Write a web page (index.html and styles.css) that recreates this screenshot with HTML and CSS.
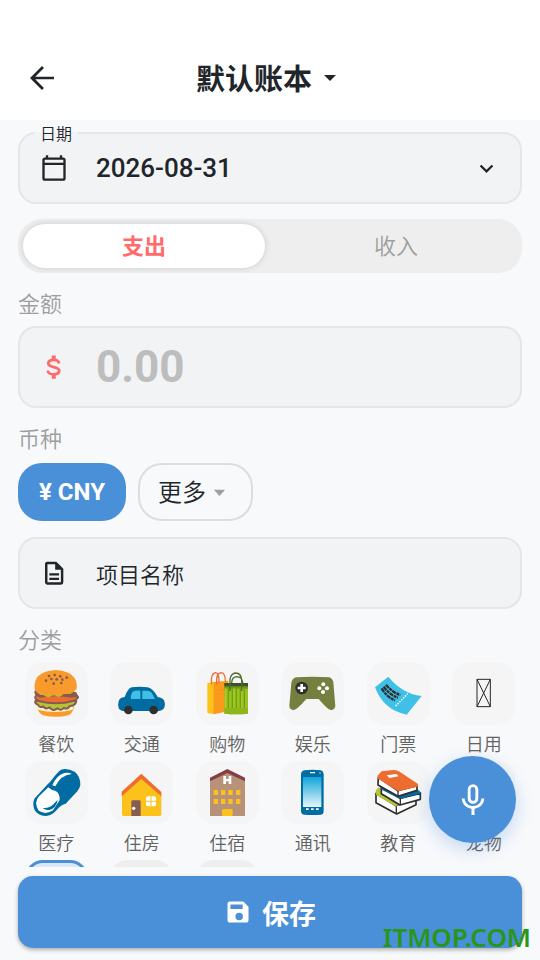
FILE: index.html
```html
<!DOCTYPE html>
<html lang="zh-CN">
<head>
<meta charset="utf-8">
<meta name="viewport" content="width=device-width, initial-scale=1">
<title>默认账本</title>
<link rel="stylesheet" href="styles.css">
</head>
<body>
<header class="appbar">
  <button class="back" type="button" aria-label="返回">
    <svg class="icon-lg" viewBox="0 0 24 24"><path fill="currentColor" d="M20 11.100H7.500l5.800-5.800L12 4l-8 8 8 8 1.300-1.300-5.800-5.800H20v-1.800z"/></svg>
  </button>
  <button class="book" type="button"><span>默认账本</span>
    <svg class="icon-lg" viewBox="0 0 24 24"><path fill="currentColor" d="M8 10l4 4 4-4z"/></svg>
  </button>
</header>

<main class="content">
  <div class="field field-date">
    <label class="float-label" for="date">日期</label>
    <svg class="icon" viewBox="0 0 24 24"><path fill="currentColor" d="M20 3h-1V1h-2v2H7V1H5v2H4c-1.100 0-2 .9-2 2v16c0 1.100.9 2 2 2h16c1.100 0 2-.9 2-2V5c0-1.100-.9-2-2-2zm0 18H4V9.500h16V21zm0-13.500H4V5h16v2.500z"/></svg>
    <input class="date-input" id="date" type="text" value="2026-08-31" readonly>
    <svg class="chevron" viewBox="0 0 24 24"><path fill="currentColor" d="M7.410 8.590L12 13.170l4.590-4.580L18 10l-6 6-6-6z"/></svg>
  </div>

  <div class="segment">
    <label class="segment-item"><input type="radio" name="kind" checked><span>支出</span></label>
    <label class="segment-item"><input type="radio" name="kind"><span>收入</span></label>
  </div>

  <label class="section-label" for="amount">金额</label>
  <div class="field field-amount">
    <svg class="icon dollar" viewBox="0 0 24 24"><path fill="none" stroke="currentColor" stroke-width="2.400" d="M16.300 9C16.100 6.800 14.200 5.900 11.800 5.900 9 5.900 7.100 7 7.100 8.800c0 4.500 9.400 2 9.400 6.500 0 2-2 3-4.700 3-3 0-4.900-1-5.100-3.300"/><path fill="none" stroke="currentColor" stroke-width="3.400" d="M11.800 2.200v4M11.800 18v4"/></svg>
    <input class="amount-input" id="amount" type="text" inputmode="decimal" placeholder="0.00">
  </div>

  <h2 class="section-label label-currency">币种</h2>
  <div class="chips">
    <button class="chip chip-active" type="button">¥ CNY</button>
    <button class="chip chip-more" type="button"><span>更多</span>
      <svg class="icon-sm" viewBox="0 0 24 24"><path fill="currentColor" d="M7 9.500l5 5.500 5-5.500z"/></svg>
    </button>
  </div>

  <div class="field field-name">
    <svg class="icon" viewBox="0 0 24 24"><path fill="currentColor" fill-rule="evenodd" d="M6.300 2.300H14l6 6v11.700q0 2-2 2H6.300q-2 0-2-2V4.300q0-2 2-2zM6.400 4.400v15.500h11.500V9.300H13V4.400zM8 12.200h8.300v2H8zM8 16h8.300v2H8z"/></svg>
    <input class="name-input" type="text" placeholder="项目名称" aria-label="项目名称">
  </div>

  <h2 class="section-label">分类</h2>
  <div class="categories">
    <button class="category" type="button">
      <svg class="tile" viewBox="29 21 189 189">
        <path fill="#f99a2c" d="M63 145h114q-1 29-18 36-37 9-76 0-18-8-20-36z"/>
        <path fill="#fff3cf" d="M64 146q20 18 52 14 37 4 60-14l-4 18q-50 14-106 0z"/>
        <path fill="#b5c334" stroke="#865c52" stroke-width="6" stroke-linejoin="round" d="M60 138q-2 8 8 11 5 11 15 5 9 11 19 3 12 14 24 3 11 9 19-1 13 5 18-6 17 0 20-15z"/>
        <path fill="#ee6c2f" stroke="#865c52" stroke-width="6" d="M62 122q58-18 122-1 10 9-8 16-53 15-106 1-16-8-8-16z"/>
        <path fill="#865c52" d="M59 106q58-12 124 6l7 17q-10-4-20-1-54-9-95 0-17-4-18-17z"/>
        <path fill="#b5c334" d="M64 107h115l-14 10q-14-6-22 1-10 13-20 5-10-6-18 2-13 4-20-5-14 2-21-13z"/>
        <path fill="#f99a2c" d="M58 102q-6-52 62-57 70 4 64 57-15 16-32 15-8-1-14 4-24-4-45 0-28-1-35-19z"/>
        <g fill="#865c52"><circle cx="101" cy="63" r="4"/><circle cx="118" cy="60" r="4"/><circle cx="135" cy="64" r="4"/><circle cx="154" cy="68" r="4"/><circle cx="92" cy="77" r="4"/><circle cx="108" cy="72" r="4"/><circle cx="124" cy="73" r="4"/><circle cx="141" cy="74" r="4"/><circle cx="115" cy="86" r="4"/><circle cx="138" cy="84" r="4"/></g>
      </svg>
      <span>餐饮</span>
    </button>
    <button class="category" type="button">
      <svg class="tile" viewBox="287 21 189 189">
        <path fill="#006ca2" d="M313 139q3-12 18-13 9-25 21-29 24-3 48 0 16 3 30 29 15 3 19 10 5 14 0 24-4 7-14 8H328q-12-1-15-9-3-10 0-20z"/>
        <path fill="#40c0e7" d="M357 109q10-3 21-2v25h-28q-2-14 7-23zM384 107h16q8 1 12 6l10 19h-38z"/>
        <circle cx="342" cy="165" r="13" fill="#2f2f2f"/><circle cx="418" cy="165" r="13" fill="#2f2f2f"/>
      </svg>
      <span>交通</span>
    </button>
    <button class="category" type="button">
      <svg class="tile" viewBox="18 21 189 189">
        <path fill="#fcc21b" d="M52 85l20-5v98l-20-4z"/><path fill="#f99a1c" d="M71 81l44-4v92l-44 9z"/>
        <path fill="#ff8a00" d="M88 106l27-10v10z"/>
        <g fill="none" stroke="#f46a35" stroke-width="4"><path d="M65 89q-4-32 11-36 12-1 11 31M80 89q-3-34 13-36 13 0 13 27"/></g>
        <path fill="#97c51b" d="M103 86h71v90q-36 3-71 0z"/><path fill="#709a16" d="M103 91h71v10h-71z"/><path fill="#3d512c" d="M103 84h71v10h-71z"/>
        <g fill="#6f9f15"><path d="M113 101h4v60h-4zM125 101h4v60h-4zM137 101h4v60h-4zM149 101h4v60h-4zM161 101h4v60h-4z"/></g>
        <path fill="#8eb51c" d="M103 159h71v17q-36 3-71 0z"/><path fill="#b5c334" d="M105 100h4v59h-4zM130 100h3v59h-3zM154 100h3v59h-3z"/>
        <g fill="none" stroke="#506b2c" stroke-width="4"><path d="M120 108V73q3-18 17-19 17 1 18 20v34M125 84q0-17 15-19 17 1 18 19"/></g>
      </svg>
      <span>购物</span>
    </button>
    <button class="category" type="button">
      <svg class="tile" viewBox="276 21 189 189">
        <path fill="#757f3f" d="M321 67q49-3 100 0 10 4 12 15l6 71q-3 13-14 12-8 0-36-33h-37q-28 32-37 33-13 0-14-13l6-68q2-13 14-17z"/>
        <circle cx="338" cy="99" r="19" fill="#2f2f2f"/><path fill="#fff" d="M334 87h8v8h8v8h-8v8h-8v-8h-8v-8h8z"/>
        <g fill="#fff"><circle cx="403" cy="88" r="6"/><circle cx="391" cy="100" r="6"/><circle cx="414" cy="100" r="6"/><circle cx="402" cy="111" r="6"/></g>
      </svg>
      <span>娱乐</span>
    </button>
    <button class="category" type="button">
      <svg class="tile" viewBox="36 21 189 189">
        <path fill="#40c0e7" d="M60 97l40-32q40 50 100 58l-45 56Q85 165 60 97z"/>
        <g fill="none" stroke="#2f2f2f" stroke-width="7" stroke-dasharray="13 2 9 2"><path d="M93 89q18 23 43 31M86 95q18 25 43 33M80 100q16 27 40 36"/></g>
        <path fill="none" stroke="#fff" stroke-width="5" stroke-linecap="round" stroke-dasharray="0 8" d="M157 117l-39 40"/>
      </svg>
      <span>门票</span>
    </button>
    <button class="category" type="button">
      <svg class="tile" viewBox="293 21 189 189">
        <path fill="none" stroke="#212529" stroke-width="3" d="M368 73h40v82h-40zl40 82M408 73l-40 82"/>
      </svg>
      <span>日用</span>
    </button>
    <button class="category" type="button">
      <svg class="tile" viewBox="29 18 189 189">
        <path fill="#006ca2" d="M137 44q19-6 41 6 18 14 17 40-2 11-9 19l-35 37q-14 3-25 17-14 18-33 20-22 0-34-16-9-19-2-36l40-43q7-6 14-16 15-20 26-28z"/>
        <path fill="#fff" d="M99 97q9 9 20 10 15 6 14 28l-20 31q-24 16-44 0-14-24 2-42zM111 91q11-29 36-37 16-3 22 3-33 3-49 37z"/>
        <path fill="#006ca2" d="M83 159q19 2 32-12l12-13q-4 25-25 31-14 0-19-6z"/>
      </svg>
      <span>医疗</span>
    </button>
    <button class="category" type="button">
      <svg class="tile" viewBox="287 18 189 189">
        <path fill="#fcc21b" d="M323 116l58-54 60 54v62q0 5-5 5H328q-5 0-5-5z"/>
        <path fill="#ee6c2f" d="M381 56l60 55v13l-60-52-59 52v-14z"/>
        <path fill="#865c52" d="M351 140q0-4 4-4h20q4 0 4 4v43h-28z"/><circle cx="358" cy="160" r="5" fill="#fff"/>
        <rect x="395" y="124" width="30" height="30" rx="6" fill="#fff"/><path stroke="#fcc21b" stroke-width="3" d="M410 123v32M394 139h32"/>
      </svg>
      <span>住房</span>
    </button>
    <button class="category" type="button">
      <svg class="tile" viewBox="18 18 189 189">
        <path fill="#b89278" d="M60 74l52-27 53 27v109H60z"/><path fill="#853f43" d="M112 42l53 26v11l-53-25-52 25V68z"/>
        <path fill="#fff" d="M100 63h8v9h8v-9h8v24h-8v-8h-8v8h-8z"/>
        <g fill="#fcc21b"><path d="M71 105h13v15H71zM93 105h13v15H93zM115 105h13v15h-13zM138 105h13v15h-13zM71 132h13v15H71zM93 132h13v15H93zM115 132h13v15h-13zM138 132h13v15h-13z"/><rect x="96" y="162" width="32" height="21" rx="4"/></g>
      </svg>
      <span>住宿</span>
    </button>
    <button class="category" type="button">
      <svg class="tile" viewBox="276 18 189 189">
        <defs><linearGradient id="screen" x1="0" y1="0" x2="0" y2="1"><stop offset="0" stop-color="#11a5da"/><stop offset="1" stop-color="#e7f5fb"/></linearGradient></defs>
        <path fill="#006ca2" d="M345 46q25-3 51 0 8 3 8 12v110q0 9-8 11-25 2-51 0-9-2-9-11V58q0-9 9-12z"/>
        <path fill="url(#screen)" d="M342 66h55v90h-55z"/>
        <path fill="#fff" d="M363 51h15v4h-15zM351 160h8v5h-8zM366 160h8v5h-8zM381 160h8v5h-8z"/><circle cx="393" cy="54" r="3" fill="#40c0e7"/>
      </svg>
      <span>通讯</span>
    </button>
    <button class="category" type="button">
      <svg class="tile" viewBox="36 48 189 189">
        <g stroke="#2f2f2f" stroke-width="5" stroke-linejoin="round">
          <path fill="#fff" d="M63 145l59 37 61-23v20l-58 28-62-34z"/><path stroke="none" fill="#b5c334" d="M62 137l8-10 62 28 52 2-62 27-58-33z"/>
          <path fill="#fff" d="M79 126l56 34 61-15v18l-61 17-56-34z"/><path stroke="none" fill="#006ca2" d="M80 121l106 11 14 12-65 18-55-28z"/>
          <path fill="#fff" d="M70 97l58 40 58-15v14l-57 18-60-34z"/>
        </g>
        <path fill="#ee6c2f" d="M69 91l11-12 36-4q10 0 18 5l54 36q4 5-1 9l-57 14-60-37q-5-5-1-11z"/><path fill="#fff" d="M95 91l29-4 7 7-28 5z"/>
        <path fill="none" stroke="#2f2f2f" stroke-width="4" d="M124 184v22M136 160v20M129 138v16"/>
      </svg>
      <span>教育</span>
    </button>
    <button class="category" type="button">
      <svg class="tile" viewBox="0 0 189 189"></svg>
      <span>宠物</span>
    </button>
    <button class="category" type="button" aria-label="已选分类"><svg class="tile tile-selected" viewBox="0 0 189 189"></svg></button>
    <button class="category" type="button" aria-label="分类"><svg class="tile tile-plain" viewBox="0 0 189 189"></svg></button>
    <button class="category" type="button" aria-label="分类"><svg class="tile tile-plain" viewBox="0 0 189 189"></svg></button>
  </div>
</main>

<footer class="savebar">
  <button class="fab" type="button" aria-label="语音输入">
    <svg class="icon-lg" viewBox="0 0 24 24"><path fill="currentColor" fill-rule="evenodd" d="M12 1.500a3.500 3.500 0 0 1 3.500 3.500v6a3.500 3.500 0 0 1-7 0V5A3.500 3.500 0 0 1 12 1.500zm0 1.900a1.600 1.600 0 0 0-1.600 1.600v6a1.600 1.600 0 0 0 3.200 0V5A1.600 1.600 0 0 0 12 3.400zM4.500 11h1.900c.3 3.300 2.600 5 5.600 5s5.300-1.700 5.600-5h1.900c-.3 3.800-2.900 6.300-6.500 6.800V22h-2v-4.200c-3.600-.5-6.200-3-6.500-6.800z"/></svg>
  </button>
  <button class="save" type="submit">
    <svg class="icon-save" viewBox="0 0 24 24"><path fill="currentColor" d="M16.500 3H5c-1.100 0-2 .9-2 2v14c0 1.100.9 2 2 2h14c1.100 0 2-.9 2-2V7.500zM13 19a3.200 3.200 0 1 1 0-6.400 3.200 3.200 0 0 1 0 6.400zM16 9.500H5.500v-4H16z"/></svg>
    保存
  </button>
  <div class="watermark">ITMOP.COM</div>
</footer>
</body>
</html>
```
FILE: styles.css
```css
* {
  box-sizing: border-box;
}

body {
  margin: 0;
  height: 100vh;
  display: flex;
  flex-direction: column;
  overflow: hidden;
  background: #f8f9fb;
  color: #212529;
  font-family: Roboto, "Noto Sans CJK SC", sans-serif;
  font-weight: 350;
}

button,
input {
  margin: 0;
  padding: 0;
  border: 0;
  background: none;
  color: inherit;
  font-family: inherit;
  font-weight: inherit;
  outline: 0;
}

svg {
  display: block;
  flex: none;
}

.icon-lg {
  width: 36px;
  height: 36px;
}

.icon {
  width: 28px;
  height: 28px;
}

.icon-sm {
  width: 27px;
  height: 27px;
  color: #9e9e9e;
}

.appbar {
  flex: none;
  display: grid;
  grid-template-columns: 36px 1fr 32px;
  align-items: center;
  padding: 36px 24px 0;
  height: 120px;
  background: #fff;
}

.book {
  justify-self: center;
  display: flex;
  align-items: center;
  font-size: 29px;
  line-height: 40px;
  font-weight: 700;
}

.book span {
  padding-top: 4px;
}

.content {
  flex: 1;
  min-height: 0;
  overflow: hidden;
  padding: 12px 18px 0;
}

.field {
  position: relative;
  display: flex;
  align-items: center;
  gap: 28px;
  height: 72px;
  padding: 0 20px;
  border: 2px solid #e4e6e9;
  border-radius: 18px;
  background: #f1f3f5;
}

.field input {
  flex: 1;
  min-width: 0;
}

.float-label {
  position: absolute;
  top: -12px;
  left: 14px;
  padding: 0 6px;
  background: linear-gradient(#f8f9fb 10px, #f1f3f5 10px);
  font-size: 16px;
  line-height: 26px;
}

.date-input {
  font-size: 26px;
}

.field .date-input {
  font-weight: 500;
}

.chevron {
  width: 27px;
  height: 27px;
}

.segment {
  display: flex;
  gap: 10px;
  height: 54px;
  margin: 15px 0 12px;
  padding: 5px;
  border-radius: 24px;
  background: #eee;
}

.segment-item {
  flex: 1;
  display: flex;
}

.segment-item input {
  position: absolute;
  opacity: 0;
}

.segment-item span {
  flex: 1;
  padding-bottom: 4px;
  display: flex;
  align-items: center;
  justify-content: center;
  border-radius: 22px;
  color: #9e9e9e;
  font-size: 22px;
}

.segment-item input:checked + span {
  background: #fff;
  color: #ff6b6b;
  font-weight: 700;
  box-shadow: 0 0 6px rgba(0, 0, 0, 0.15);
}

.section-label {
  display: block;
  margin: 0 0 4px;
  padding-top: 2px;
  color: #9e9e9e;
  font-size: 22px;
  line-height: 35px;
  font-weight: 350;
}

.label-currency {
  padding: 0 0 2px;
}

.field-amount {
  height: 82px;
  margin-bottom: 14px;
}

.dollar {
  color: #ff6b6b;
}

.amount-input {
  font-size: 44px;
  font-weight: 700;
}

.amount-input::placeholder {
  color: #bdbdbd;
  opacity: 1;
}

.chips {
  display: flex;
  align-items: flex-start;
  gap: 12px;
  margin-bottom: 16px;
}

.chip {
  display: flex;
  align-items: center;
  height: 58px;
  padding: 0 21px;
  border-radius: 24px;
  font-size: 24px;
}

.chip-active {
  background: #4a90d9;
  color: #fff;
  font-weight: 700;
}

.chip-more {
  padding: 0 18px;
  border: 2px solid #dcddde;
}

.chip-more span {
  padding-bottom: 3px;
}

.name-input {
  padding-top: 4px;
  font-size: 22px;
}

.name-input::placeholder {
  color: #212529;
  opacity: 1;
}

.field-name {
  margin-bottom: 12px;
}

.categories {
  display: grid;
  grid-template-columns: repeat(6, 1fr);
  gap: 9px;
}

.category {
  display: flex;
  flex-direction: column;
  align-items: center;
  gap: 7px;
  height: 90px;
  color: #616161;
  font-size: 18px;
  line-height: 26px;
}

.tile {
  width: 63px;
  height: 63px;
  border-radius: 18px;
  background: #f5f5f5;
}

.tile-selected {
  border: 3px solid #4a90d9;
  background: #dbe7f6;
}

.tile-plain {
  background: #eee;
}

.savebar {
  position: relative;
  flex: none;
  padding: 9px 18px 12px;
}

.save {
  display: flex;
  align-items: center;
  justify-content: center;
  gap: 10px;
  width: 100%;
  height: 72px;
  border-radius: 15px;
  background: #4a90d9;
  color: #fff;
  font-size: 27px;
  font-weight: 700;
  box-shadow: 0 2px 4px rgba(0, 0, 0, 0.3);
}

.icon-save {
  width: 28px;
  height: 28px;
}

.fab {
  position: absolute;
  right: 24px;
  bottom: 117px;
  display: flex;
  align-items: center;
  justify-content: center;
  width: 87px;
  height: 87px;
  border-radius: 50%;
  background: #4a90d9;
  color: #fff;
  box-shadow: 0 6px 18px rgba(74, 144, 217, 0.3);
}

.watermark {
  position: absolute;
  right: 9px;
  bottom: 5px;
  color: #289616;
  font-family: "Noto Sans", sans-serif;
  font-size: 26px;
  line-height: 36px;
  font-weight: 600;
}
```
